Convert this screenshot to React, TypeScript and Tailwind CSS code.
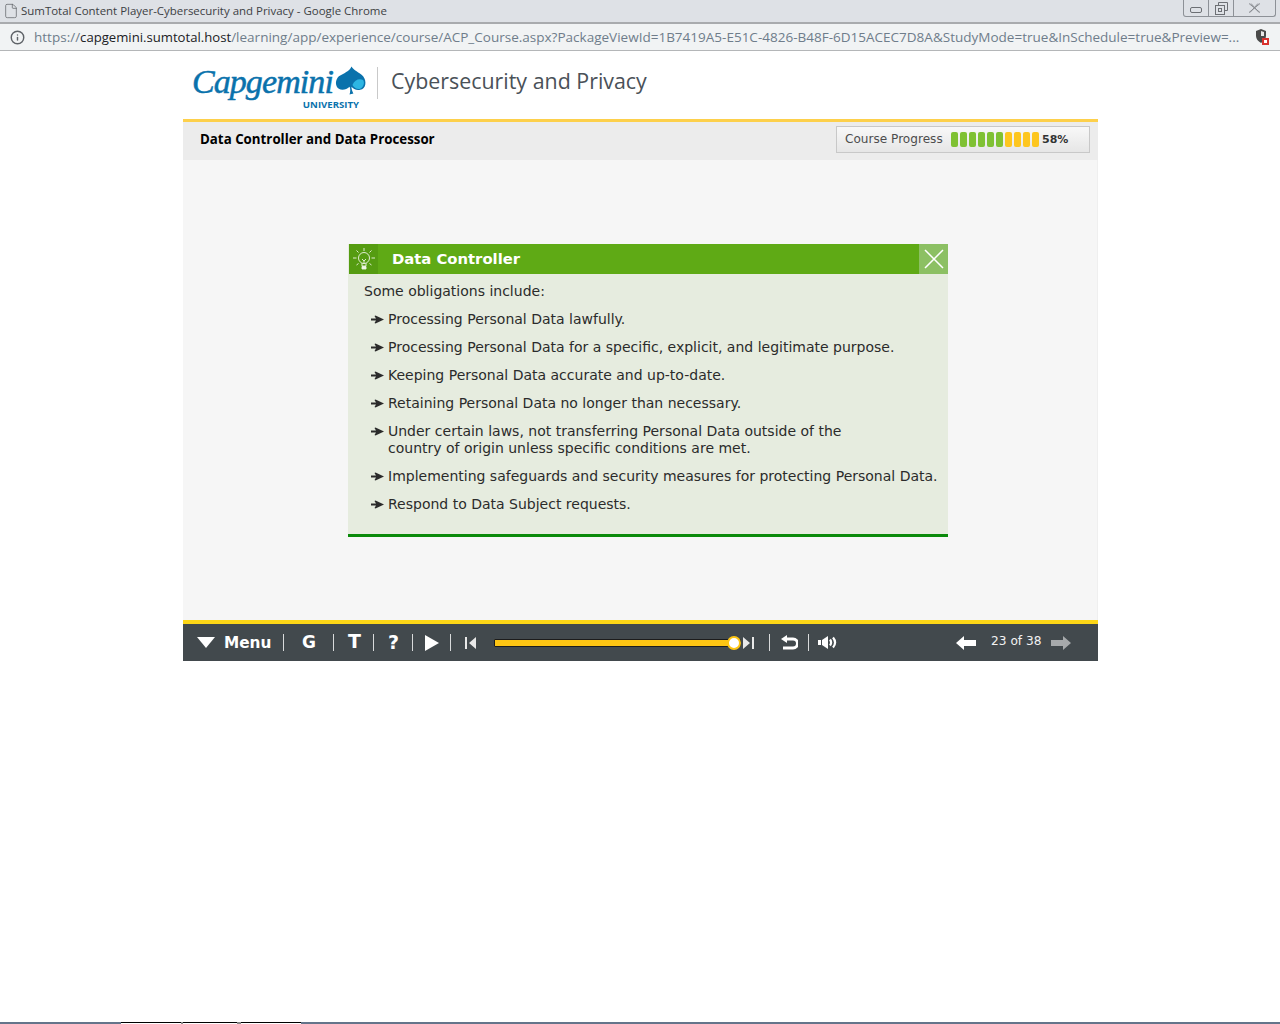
import { File, Info } from "lucide-react";

const items = [
  "Processing Personal Data lawfully.",
  "Processing Personal Data for a specific, explicit, and legitimate purpose.",
  "Keeping Personal Data accurate and up-to-date.",
  "Retaining Personal Data no longer than necessary.",
  "Under certain laws, not transferring Personal Data outside of the\ncountry of origin unless specific conditions are met.",
  "Implementing safeguards and security measures for protecting Personal Data.",
  "Respond to Data Subject requests.",
];

const ui = "font-['Open_Sans',sans-serif]";
const verdana = "font-['DejaVu_Sans',sans-serif]";

function Arrow({ className = "" }: { className?: string }) {
  return (
    <svg width="13" height="9" viewBox="0 0 13 9" className={className}>
      <path d="M0 3.500h5L3.500 1l1-.5L13 4.500 4.500 8.500l-1-.5L5 5.500H0z" fill="#2b2b2b" />
    </svg>
  );
}

function Bulb() {
  return (
    <svg width="24" height="26" viewBox="0 0 24 26" fill="none" stroke="#eef5e4" strokeWidth="0.9">
      <circle cx="12" cy="12" r="5.500" />
      <path d="M10 17v3h4v-3M10 13l2 2 2-2M12 15v3" />
      <path d="M12 2v3M4.500 4.500l2 2M19.500 4.500l-2 2M1 12h3.500M19.500 12H23M4.500 19l2-1.500M19.500 19l-2-1.500" />
      <path d="M10 20.500h4v2.500h-4z" fill="#eef5e4" />
    </svg>
  );
}

function Logo() {
  return (
    <div className="flex w-[175px] flex-col items-end">
      <div className="flex h-[34px] items-center">
        <span className="font-['Liberation_Serif',serif] text-[34px] italic leading-[34px] tracking-[-0.9px] text-[#0a72ac] [-webkit-text-stroke:0.5px_#0a72ac]">
          Capgemini
        </span>
        <svg width="33" height="32" viewBox="0 0 34 32" className="-mt-[2px] ml-[1px]">
          <path d="M18 1c2 4 8 6 12 10 4 5 3 13-3 14-4 1-7-1-9-3 0 3 1 5 2 7l-4 1c1-3 1-6 0-8-3 3-8 4-11 2-4-3-4-9 0-13 5-3 11-5 13-10z" fill="#0a72ac" />
          <path d="M19 20c2-5 7-7 11-5 2 3 0 8-3 9-3 1-6-1-8-4z" fill="#2db6e3" />
        </svg>
      </div>
      <span className={`${ui} mr-[8px] text-[9.600px] font-bold leading-[12px] text-[#0a72ac]`}>UNIVERSITY</span>
    </div>
  );
}

function WindowButtons() {
  return (
    <div className="ml-auto mr-[4px] flex h-[17px] w-[93px] self-start rounded-b-[3px] border border-t-0 border-[#8d9197]">
      <div className="flex w-[25px] items-center justify-center border-r border-[#8d9197]">
        <div className="mt-[3px] h-[6px] w-[12px] rounded-[2px] border border-[#6c6f74]" />
      </div>
      <div className="flex w-[25px] items-center justify-center border-r border-[#8d9197]">
        <svg width="13" height="13" viewBox="0 0 13 13" fill="none" stroke="#6c6f74">
          <path d="M3.500 3V.5h9v8H10" />
          <rect x="0.500" y="3.500" width="9" height="9" />
          <rect x="3.500" y="6.500" width="3" height="3" />
        </svg>
      </div>
      <div className="flex flex-1 items-center justify-center">
        <svg width="13" height="10" viewBox="0 0 13 10" fill="none" stroke="#8a8d92" strokeWidth="1">
          <path d="M1 0.500l11 9M12 0.500l-11 9M3 0.500l8 9M10 0.500l-8 9" />
        </svg>
      </div>
    </div>
  );
}

function Shield() {
  return (
    <div className="relative h-[16px] w-[14px]">
      <svg width="12" height="14" viewBox="0 0 12 14">
        <path d="M6 0l5 2v5c0 3-2 5-5 7-3-2-5-4-5-7V2z" fill="#4a4a4a" />
        <path d="M6 2l3 1v4H6z" fill="#e8e8e8" />
      </svg>
      <div className="absolute bottom-0 right-0 flex h-[7px] w-[7px] items-center justify-center bg-[#d9322e]">
        <span className="block h-[3px] w-[3px] bg-white" />
      </div>
    </div>
  );
}

function Sep({ className = "" }: { className?: string }) {
  return <div className={`h-[17px] w-px bg-[#d8dadb] ${className}`} />;
}

function Toolbar() {
  return (
    <div className={`flex h-[37px] items-center bg-[#42494d] text-white ${verdana}`}>
      <svg width="18" height="11" viewBox="0 0 18 11" className="ml-[14px]">
        <path d="M0 0h18l-9 11z" fill="#fff" />
      </svg>
      <span className="ml-[9px] mt-[2px] w-[46px] whitespace-nowrap text-[15.300px] font-bold leading-none">Menu</span>
      <Sep className="ml-[13px]" />
      <span className="ml-[18px] w-[13px] text-center text-[17px] font-bold leading-none">G</span>
      <Sep className="ml-[18px]" />
      <span className="ml-[14px] -mt-[2px] w-[12px] text-center text-[19px] font-bold leading-none">T</span>
      <Sep className="ml-[13px]" />
      <span className="ml-[14px] w-[10px] text-center text-[19px] font-bold leading-none">?</span>
      <Sep className="ml-[14px]" />
      <svg width="14" height="16" viewBox="0 0 14 16" className="ml-[12px]">
        <path d="M0 0l14 8-14 8z" fill="#fff" />
      </svg>
      <Sep className="ml-[11px]" />
      <svg width="11" height="12" viewBox="0 0 11 12" className="ml-[14px]">
        <path d="M0 0h2v12H0zM11 0v12L4 6z" fill="#e8e8e8" />
      </svg>
      <div className="relative ml-[18px] h-[8px] w-[247px] rounded-[1px] border border-[#1c1c1c] bg-[#fdc513]">
        <div className="absolute -right-[1px] -top-[4px] h-[14px] w-[14px] rounded-full border-2 border-[#fdc513] bg-white" />
      </div>
      <svg width="11" height="12" viewBox="0 0 11 12" className="ml-[2px]">
        <path d="M0 0l7 6-7 6zM9 0h2v12H9z" fill="#e8e8e8" />
      </svg>
      <Sep className="ml-[15px]" />
      <svg width="17" height="15" viewBox="0 0 17 15" className="ml-[11px]" fill="none">
        <path d="M6 0v8L0 4z" fill="#fff" />
        <path d="M5 4h7c6 0 6 9 0 9H2" stroke="#fff" strokeWidth="3" />
      </svg>
      <Sep className="ml-[10px]" />
      <svg width="19" height="13" viewBox="0 0 19 13" className="ml-[9px]" fill="none">
        <path d="M0 4h3v5H0zM4 4l6-4v13L4 9z" fill="#fff" />
        <path d="M12 3.500c1.500 2 1.500 4 0 6M15 1.500c2.500 3 2.500 7 0 10" stroke="#fff" strokeWidth="2.200" />
      </svg>
      <svg width="20" height="14" viewBox="0 0 20 14" className="ml-[119px]">
        <path d="M0 7l8-7v4h12v6H8v4z" fill="#fff" />
      </svg>
      <span className="ml-[15px] -mt-[3px] w-[50px] whitespace-nowrap text-[12.200px] leading-none text-[#f2f2f2]">23 of 38</span>
      <svg width="20" height="14" viewBox="0 0 20 14" className="ml-[10px]">
        <path d="M20 7l-8-7v4H0v6h12v4z" fill="#a6a9ab" />
      </svg>
    </div>
  );
}

export default function App() {
  return (
    <div className={`flex h-[1024px] flex-col overflow-hidden bg-white ${ui}`}>
      <div className="flex h-[22px] items-center bg-[#dee1e6] pl-[3px]">
        <File size={16} strokeWidth={1} className="text-[#55585c]" />
        <span className="ml-[2px] -mt-[1px] whitespace-nowrap text-[11.460px] leading-none text-[#3c4043]">
          SumTotal Content Player-Cybersecurity and Privacy - Google Chrome
        </span>
        <WindowButtons />
      </div>
      <div className="h-[2px] bg-[#a9abae]" />
      <div className="flex h-[26px] items-center bg-[#f1f3f4] pl-[10px]">
        <Info size={15} strokeWidth={2.3} className="text-[#5f6368]" />
        <div className="ml-[9px] mt-[2px] w-[1221px] whitespace-nowrap text-[13.520px] leading-none text-[#6f7d8b]">
          https://<span className="text-[13.140px] text-[#202124]">capgemini.sumtotal.host</span>
          /learning/app/experience/course/ACP_Course.aspx?PackageViewId=1B7419A5-E51C-4826-B48F-6D15ACEC7D8A&StudyMode=true&InSchedule=true&Preview=...
        </div>
        <Shield />
      </div>
      <div className="h-px bg-[#b4b6b8]" />

      <div className="ml-[183px] flex w-[915px] flex-col">
        <div className="flex h-[68px] items-center">
          <div className="ml-[9px] mt-[5px]">
            <Logo />
          </div>
          <div className="ml-[10px] -mt-[4px] h-[32px] w-px bg-[#c9c9c9]" />
          <span className="ml-[13px] -mt-[8px] whitespace-nowrap text-[21.400px] leading-none text-[#4a5158]">Cybersecurity and Privacy</span>
        </div>
        <div className="h-[3px] bg-[#fdd04b]" />
        <div className="flex h-[38px] items-start bg-[#ececec] pl-[17px] pr-[8px]">
          <span className="mt-[10px] whitespace-nowrap text-[13.300px] font-bold leading-[14px] text-black">Data Controller and Data Processor</span>
          <div className={`ml-auto mt-[4px] flex h-[27px] w-[254px] items-center border border-[#c8c8c8] bg-gradient-to-b from-[#f8f8f8] to-[#e6e6e6] pl-[8px] ${verdana}`}>
            <span className="w-[106px] whitespace-nowrap text-[12.100px] leading-none text-[#4d4d4d]">Course Progress</span>
            <div className="flex gap-[2px]">
              {[0, 1, 2, 3, 4, 5, 6, 7, 8, 9].map((i) => (
                <div key={i} className={`h-[15px] w-[7px] rounded-[2px] ${i < 6 ? "bg-[#7fc133]" : "bg-[#fdc61f]"}`} />
              ))}
            </div>
            <span className="ml-[3px] text-[11px] font-bold leading-none text-[#333]">58%</span>
          </div>
        </div>
        <div className={`h-[460px] border-r border-[#efefef] bg-[#f6f6f6] pl-[165px] pt-[84px] ${verdana}`}>
          <div className="w-[600px] border-b-[3px] border-[#0a8a0a] bg-[#e6ecdf]">
            <div className="ml-px flex h-[30px] items-center bg-[#5faa15]">
              <div className="flex h-full w-[29px] items-center justify-center bg-[#559c11]">
                <Bulb />
              </div>
              <span className="ml-[14px] whitespace-nowrap text-[14.800px] font-bold leading-none text-white">Data Controller</span>
              <div className="ml-auto flex h-full w-[29px] items-center justify-center bg-[#8cc063]">
                <svg width="20" height="20" viewBox="0 0 20 20" stroke="#fff" strokeWidth="1.500">
                  <path d="M1 1l18 18M19 1L1 19" />
                </svg>
              </div>
            </div>
            <div className="flex flex-col gap-[11px] pb-[21px] pl-[16px] pr-[2px] pt-[9px] text-[14px] leading-[17px] text-[#2b2b2b]">
              <p>Some obligations include:</p>
              {items.map((item) => (
                <div key={item} className="flex pl-[7px]">
                  <Arrow className="mt-[4px] shrink-0" />
                  <p className="ml-[4px] whitespace-pre-line">{item}</p>
                </div>
              ))}
            </div>
          </div>
        </div>
        <div className="h-[4px] bg-[#fdd617]" />
        <Toolbar />
      </div>

      <div className="mt-auto flex h-[2px]">
        <div className="w-[121px] bg-[#64748a]" />
        <div className="w-[60px] border-t border-black bg-white" />
        <div className="w-[2px] bg-[#8a8a8a]" />
        <div className="w-[54px] border-t border-black bg-white" />
        <div className="w-[4px] bg-[#8a8a8a]" />
        <div className="w-[60px] border-t border-black bg-white" />
        <div className="flex-1 bg-[#64748a]" />
      </div>
    </div>
  );
}
